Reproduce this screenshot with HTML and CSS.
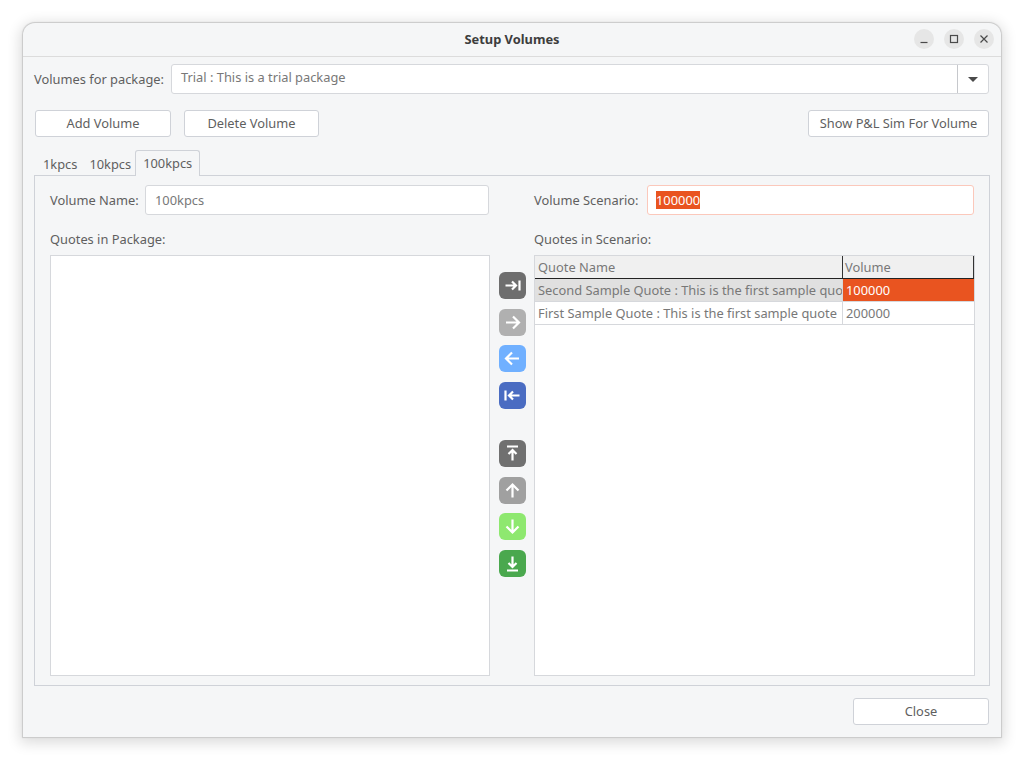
FILE: index.html
```html
<!DOCTYPE html>
<html lang="en">
<head>
<meta charset="utf-8">
<title>Setup Volumes</title>
<link rel="stylesheet" href="styles.css">
</head>
<body>
<div class="window">
  <header class="titlebar">
    <div class="title">Setup Volumes</div>
    <div class="wm">
      <span class="wm-btn"><svg viewBox="0 0 20 20" width="20" height="20"><path d="M6.500 13.500h7" class="wm-s"/></svg></span>
      <span class="wm-btn"><svg viewBox="0 0 20 20" width="20" height="20"><rect x="6.500" y="6.500" width="7" height="7" class="wm-s"/></svg></span>
      <span class="wm-btn"><svg viewBox="0 0 20 20" width="20" height="20"><path d="M6.500 6.500l7 7M13.500 6.500l-7 7" class="wm-s"/></svg></span>
    </div>
  </header>
  <main class="content">
    <div class="pkg-row">
      <label class="lbl pkg-lbl">Volumes for package:</label>
      <div class="combo">
        <div class="combo-text">Trial : This is a trial package</div>
        <div class="combo-arrow"><span class="caret"></span></div>
      </div>
    </div>
    <div class="actions">
      <button class="btn wide">Add Volume</button>
      <button class="btn del">Delete Volume</button>
      <span class="spacer"></span>
      <button class="btn show">Show P&amp;L Sim For Volume</button>
    </div>
    <div class="tabs">
      <span class="tab">1kpcs</span>
      <span class="tab">10kpcs</span>
      <span class="tab active">100kpcs</span>
    </div>
    <section class="panel">
      <div class="col">
        <div class="field">
          <label class="lbl name-lbl">Volume Name:</label>
          <div class="input">100kpcs</div>
        </div>
        <div class="list-title">Quotes in Package:</div>
        <div class="list"></div>
      </div>
      <div class="mid">
        <div class="group">
          <span class="ico dgrey"><svg viewBox="0 0 27 27"><path d="M6.500 13.500h10M13 9.500l4 4-4 4M20.500 8.500v10"/></svg></span>
          <span class="ico lgrey"><svg viewBox="0 0 27 27"><path d="M7 13.500h13M14 7.500l6 6-6 6"/></svg></span>
          <span class="ico lblue"><svg viewBox="0 0 27 27"><path d="M20 13.500H7M13 7.500l-6 6 6 6"/></svg></span>
          <span class="ico dblue"><svg viewBox="0 0 27 27"><path d="M20.500 13.500h-10M14 9.500l-4 4 4 4M6.500 8.500v10"/></svg></span>
        </div>
        <div class="group">
          <span class="ico dgrey2"><svg viewBox="0 0 27 27"><path d="M13.500 20.500v-10M9.500 14l4-4 4 4M8 6.500h11"/></svg></span>
          <span class="ico mgrey"><svg viewBox="0 0 27 27"><path d="M13.500 20.500V7.500M7.500 13.500l6-6 6 6"/></svg></span>
          <span class="ico lgreen"><svg viewBox="0 0 27 27"><path d="M13.500 6.500v13M7.500 13.500l6 6 6-6"/></svg></span>
          <span class="ico dgreen"><svg viewBox="0 0 27 27"><path d="M13.500 6.500v10M9.500 13l4 4 4-4M8 20.500h11"/></svg></span>
        </div>
      </div>
      <div class="col right">
        <div class="field">
          <label class="lbl scen-lbl">Volume Scenario:</label>
          <div class="input focus"><span class="sel">100000</span></div>
        </div>
        <div class="list-title">Quotes in Scenario:</div>
        <div class="list">
          <div class="tr th"><div class="c1">Quote Name</div><div class="c2">Volume</div></div>
          <div class="tr selrow"><div class="c1">Second Sample Quote : This is the first sample quote</div><div class="c2 cur">100000</div></div>
          <div class="tr"><div class="c1">First Sample Quote : This is the first sample quote</div><div class="c2">200000</div></div>
        </div>
      </div>
    </section>
    <div class="footer"><button class="btn wide">Close</button></div>
  </main>
</div>
</body>
</html>
```
FILE: styles.css
```css
* { box-sizing: border-box; }
html, body { margin: 0; height: 100%; background: #fff; }
body {
  padding: 23px 23px 22px;
  font-family: "Noto Sans", "Open Sans", sans-serif;
  font-size: 12.85px;
  color: #5f5f5f;
  overflow: hidden;
}
.window {
  height: 714px;
  background: #f5f6f7;
  border-radius: 12px 12px 0 0;
  box-shadow: 0 0 1px 1px #c9c9c9, 0 3px 14px 3px rgba(0, 0, 0, .14);
  display: flex;
  flex-direction: column;
}
.titlebar {
  height: 34px;
  flex: none;
  border-bottom: 1px solid #dcdcdc;
  position: relative;
  display: flex;
  justify-content: center;
  align-items: center;
  padding-bottom: 2px;
}
.title { font-weight: 700; font-size: 12.85px; color: #3d3d3d; }
.wm { position: absolute; right: 7px; top: 6px; display: flex; gap: 10px; }
.wm-btn { width: 20px; height: 20px; border-radius: 50%; background: #e6e6e6; display: block; }
.wm-btn svg { display: block; }
.wm-s { fill: none; stroke: #4a4a4a; stroke-width: 1.2; }
.content { flex: 1; display: flex; flex-direction: column; padding: 7px 12px 12px 11px; min-height: 0; }
.pkg-row { display: flex; align-items: center; height: 30px; }
.lbl { white-space: nowrap; flex: none; }
.pkg-lbl { width: 137px; padding-bottom: 1px; }
.name-lbl { width: 95px; }
.scen-lbl { width: 113px; }
.combo {
  flex: 1;
  height: 30px;
  display: flex;
  background: #fff;
  border: 1px solid #d6d8dc;
  border-radius: 3px;
}
.combo-text { flex: 1; padding-left: 9px; line-height: 24px; color: #787878; }
.combo-arrow { width: 31px; border-left: 1px solid #c6c8cc; display: flex; align-items: center; justify-content: center; }
.caret { width: 0; height: 0; border: 5px solid transparent; border-top: 5px solid #4a4a4a; border-bottom: 0; }
.actions { display: flex; gap: 13px; margin-top: 16px; padding-left: 1px; }
.spacer { flex: 1; }
.btn {
  height: 27px;
  background: #fff;
  border: 1px solid #cfd2d8;
  border-radius: 3px;
  font: inherit;
  color: #5f5f5f;
  padding: 0 0 2px;
}
.wide { width: 136px; }
.del { width: 135px; }
.show { width: 181px; }
.tabs { display: flex; height: 27px; margin-top: 12px; padding-left: 1px; align-items: flex-end; position: relative; z-index: 1; }
.tab { padding: 0 7px 0 8px; height: 24px; line-height: 25px; }
.tab:nth-child(2) { padding: 0 5px 0 5px; }
.tab.active {
  height: 26px;
  line-height: 25px;
  width: 65px;
  padding: 0;
  text-align: center;
  background: #f5f6f7;
  border: 1px solid #cfd2d8;
  border-bottom: 0;
  border-radius: 3px 3px 0 0;
  margin-left: -1px;
}
.panel {
  flex: 1;
  min-height: 0;
  margin-top: -1px;
  margin-right: -1px;
  border: 1px solid #cfd2d8;
  padding: 9px 14px 9px 15px;
  display: flex;
}
.col { width: 440px; flex: none; display: flex; flex-direction: column; min-height: 0; }
.right { width: 441px; }
.right .input { margin-right: 1px; }
.field { display: flex; align-items: center; height: 30px; }
.col:first-child .field { padding-right: 1px; }
.input {
  flex: 1;
  height: 30px;
  background: #fff;
  border: 1px solid #d6d8dc;
  border-radius: 3px;
  padding-left: 9px;
  line-height: 28px;
  color: #787878;
}
.focus { border-color: #fbc8bb; padding-left: 8px; }
.sel { background: #e95420; color: #fff; display: inline-block; line-height: 18px; }
.list-title { margin-top: 15px; height: 25px; line-height: 18px; }
.list { flex: 1; background: #fff; border: 1px solid #d6d8dc; min-height: 0; }
.mid { width: 44px; flex: none; display: flex; flex-direction: column; align-items: center; gap: 31px; padding-top: 87px; }
.group { display: flex; flex-direction: column; gap: 9.67px; }
.ico { display: block; width: 27px; height: 27px; border-radius: 6px; }
.ico svg { display: block; width: 27px; height: 27px; fill: none; stroke: #fff; stroke-width: 2.2; }
.dgrey { background: #6e6e6e; }
.lgrey { background: #b0b0b0; }
.lblue { background: #70b0ff; }
.dblue { background: #4a6cc2; }
.dgrey2 { background: #707070; }
.mgrey { background: #a0a0a0; }
.lgreen { background: #8ee86f; }
.dgreen { background: #4aa84e; }
.tr { display: flex; height: 23px; border-bottom: 1px solid #d6d8dc; line-height: 22px; color: #787878; }
.c1 { width: 308px; flex: none; padding-left: 3px; white-space: nowrap; overflow: hidden; border-right: 1px solid #d6d8dc; }
.c2 { flex: 1; padding-left: 3px; }
.th { background: #f0f0f0; border-bottom: 1px solid #222; }
.th .c1 { border-right-color: #333; }
.th .c2 { border-right: 1px solid #333; padding-left: 2px; }
.selrow { background: #e0e0e0; }
.cur { background: #e95420; color: #fff; }
.footer { display: flex; justify-content: flex-end; margin-top: 12px; }
```
